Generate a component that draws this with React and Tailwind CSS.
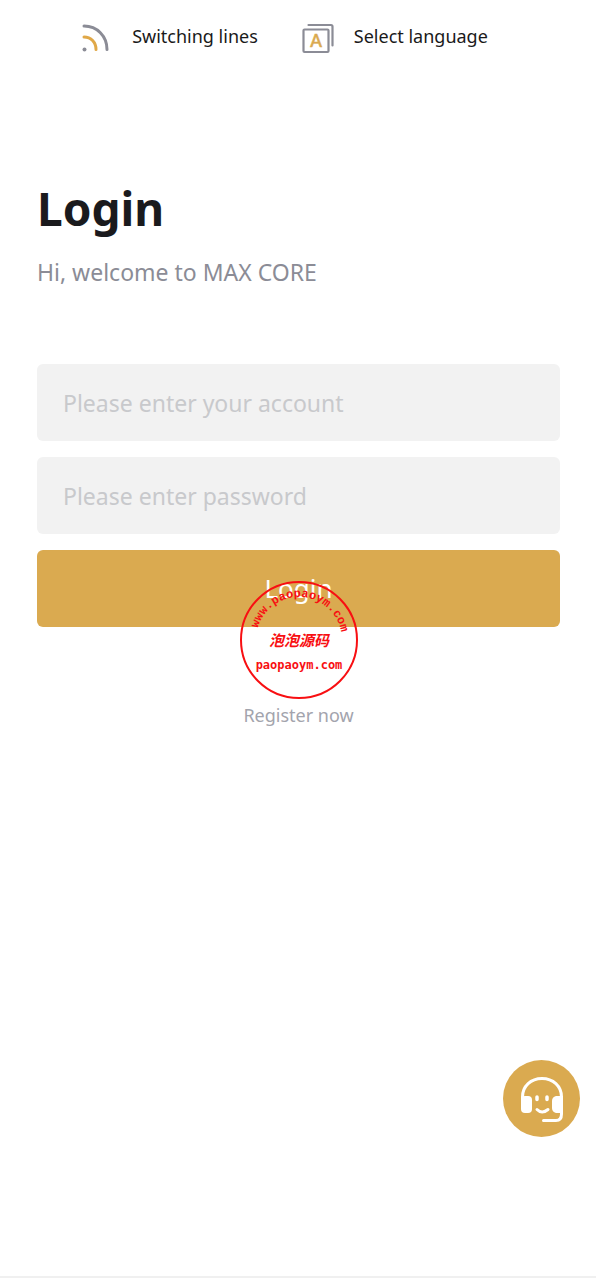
import { useState } from "react";

function LinesIcon() {
    return (
        <svg viewBox="0 0 32 32" className="w-8 h-8" fill="none" strokeWidth="3" strokeLinecap="round" aria-hidden="true">
            <path d="M4 6C17 6 27 16 27 29.500" stroke="#8b8c96" />
            <path d="M4 17C11 17 16 22 16 29.500" stroke="#e0a848" />
            <circle cx="4.500" cy="29.500" r="2" fill="#8b8c96" />
        </svg>
    );
}

function LanguageIcon() {
    return (
        <svg viewBox="0 0 32 32" className="w-8 h-8 overflow-visible" fill="none" stroke="#8b8c96" strokeWidth="2.2" strokeLinecap="round" aria-hidden="true">
            <path d="M6.500 5H29Q30.500 5 30.500 6.500V25.500" />
            <rect x="1.500" y="9.500" width="25" height="22.500" rx="1" />
            <text x="14" y="27" textAnchor="middle" fill="#daaa50" stroke="#daaa50" strokeWidth="0.5" className="text-[17px] font-semibold font-['Lato',sans-serif]">A</text>
        </svg>
    );
}

function SupportIcon() {
    return (
        <svg viewBox="0 0 44 48" className="w-11 h-12" fill="none" stroke="#fff" strokeWidth="3" strokeLinecap="round" aria-hidden="true">
            <path d="M2.500 24V22C2.500 11 11 3.500 22 3.500S41.500 11 41.500 22V39Q41.500 45.500 36 45.500H23.500" />
            <rect x="1" y="21" width="11" height="17" rx="4" fill="#fff" stroke="none" />
            <path d="M43 21H36Q32 22 32 26V33Q32 37 36 38H43Z" fill="#fff" stroke="none" />
            <path d="M17 22V24.500M27 22V24.500" strokeWidth="3.500" />
            <path d="M17 34.500Q22 39.500 28 34.500" />
        </svg>
    );
}

function Stamp() {
    return (
        <svg viewBox="0 0 120 120" className="absolute left-1/2 top-[30px] w-[120px] h-[120px] -translate-x-1/2 pointer-events-none" fill="#f80f12">
            <defs>
                <path id="stamp-arc" d="M17 58A43 43 0 0 1 103 62" />
            </defs>
            <circle cx="60" cy="60" r="58" fill="none" stroke="#f80f12" strokeWidth="2" />
            <text className="text-[12px] font-bold font-['Liberation_Mono',monospace]">
                <textPath href="#stamp-arc" startOffset="50%" textAnchor="middle">www.paopaoym.com</textPath>
            </text>
            <text x="60" y="66" textAnchor="middle" className="text-[15px] font-bold italic font-['Noto_Sans_CJK_SC',sans-serif]">泡泡源码</text>
            <text x="60" y="89" textAnchor="middle" className="text-[12px] font-bold font-['DejaVu_Sans_Mono',monospace]">paopaoym.com</text>
        </svg>
    );
}

function App() {
    const [account, setAccount] = useState("");
    const [password, setPassword] = useState("");

    return (
        <div className="min-h-screen bg-white border-b-2 border-[#f0f0f0] font-['Noto_Sans','Open_Sans',sans-serif]">
            <header className="flex justify-center gap-11 pt-5 pr-7">
                <button type="button" className="flex items-center gap-5 text-[18px] leading-8 text-[#1a1a1a]">
                    <LinesIcon />
                    Switching lines
                </button>
                <button type="button" className="flex items-center gap-5 text-[18px] leading-8 text-[#1a1a1a]">
                    <LanguageIcon />
                    Select language
                </button>
            </header>
            <main className="pl-[37px] pr-9 pt-[122px]">
                <h1 className="text-[46px] leading-[68px] font-bold text-[#1a1a1d]">Login</h1>
                <p className="mt-[14px] text-[23px] leading-8 text-[#8b8c96]">Hi, welcome to MAX CORE</p>
                <form onSubmit={(e) => e.preventDefault()} className="mt-[76px] flex flex-col gap-4">
                    <input
                        type="text"
                        aria-label="Account"
                        value={account}
                        onChange={(e) => setAccount(e.target.value)}
                        placeholder="Please enter your account"
                        className="w-full h-[77px] px-[26px] rounded-md bg-[#f2f2f2] text-[23px] outline-none placeholder:text-[#c8c9cc]"
                    />
                    <input
                        type="password"
                        aria-label="Password"
                        value={password}
                        onChange={(e) => setPassword(e.target.value)}
                        placeholder="Please enter password"
                        className="w-full h-[77px] px-[26px] rounded-md bg-[#f2f2f2] text-[23px] outline-none placeholder:text-[#c8c9cc]"
                    />
                    <div className="relative">
                        <button type="submit" className="w-full h-[77px] rounded-md bg-[#daaa50] text-[26px] text-white">Login</button>
                        <Stamp />
                    </div>
                </form>
                <div className="mt-[72px] text-center">
                    <a href="#register" className="text-[18px] leading-8 text-[#a3a4ad]">Register now</a>
                </div>
            </main>
            <button type="button" aria-label="Customer service" className="fixed right-4 bottom-[141px] w-[77px] h-[77px] flex items-center justify-center rounded-full bg-[#daaa50]">
                <SupportIcon />
            </button>
        </div>
    );
}

export default App;
